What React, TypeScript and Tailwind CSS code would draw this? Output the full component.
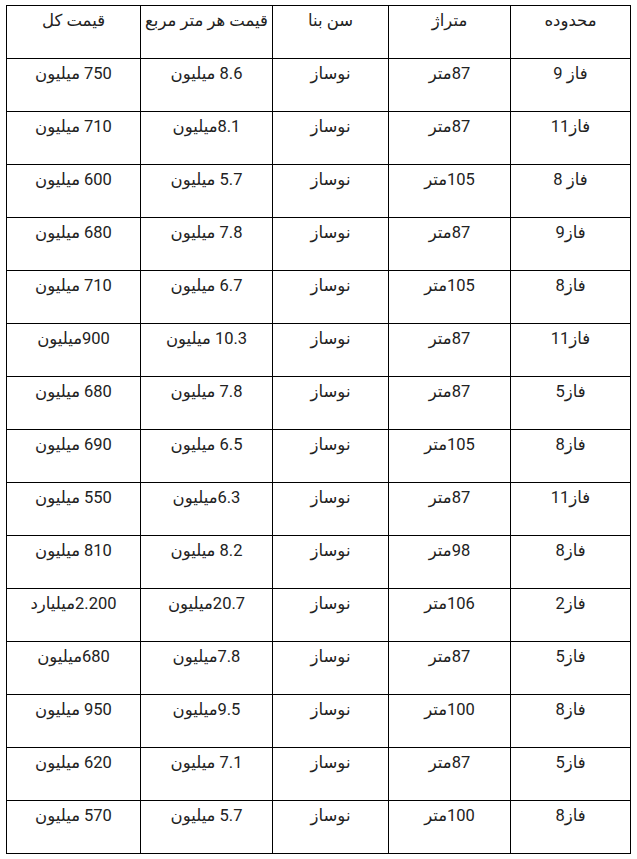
import React from "react";

const headers = ["محدوده", "متراژ", "سن بنا", "قیمت هر متر مربع", "قیمت کل"];

const rows: string[][] = [
  ["فاز 9", "87متر", "نوساز", "8.6 میلیون", "750 میلیون"],
  ["فاز11", "87متر", "نوساز", "8.1میلیون", "710 میلیون"],
  ["فاز 8", "105متر", "نوساز", "5.7 میلیون", "600 میلیون"],
  ["فاز9", "87متر", "نوساز", "7.8 میلیون", "680 میلیون"],
  ["فاز8", "105متر", "نوساز", "6.7 میلیون", "710 میلیون"],
  ["فاز11", "87متر", "نوساز", "10.3 میلیون", "900میلیون"],
  ["فاز5", "87متر", "نوساز", "7.8 میلیون", "680 میلیون"],
  ["فاز8", "105متر", "نوساز", "6.5 میلیون", "690 میلیون"],
  ["فاز11", "87متر", "نوساز", "6.3میلیون", "550 میلیون"],
  ["فاز8", "98متر", "نوساز", "8.2 میلیون", "810 میلیون"],
  ["فاز2", "106متر", "نوساز", "20.7میلیون", "2.200میلیارد"],
  ["فاز5", "87متر", "نوساز", "7.8میلیون", "680میلیون"],
  ["فاز8", "100متر", "نوساز", "9.5میلیون", "950 میلیون"],
  ["فاز5", "87متر", "نوساز", "7.1 میلیون", "620 میلیون"],
  ["فاز8", "100متر", "نوساز", "5.7 میلیون", "570 میلیون"],
];

const widths = ["w-[120px]", "w-[122px]", "w-[116px]", "w-[132px]", "w-[134px]"];

const cell =
  "h-[53px] border border-black align-top pt-[5px] text-center font-normal";

export default function App() {
  return (
    <div className="bg-white min-h-screen pt-[5px] pl-[6px]">
      <table
        dir="rtl"
        className="w-[624px] table-fixed border-collapse text-[16.5px] leading-[20px] text-[#222]"
        style={{ fontFamily: "Roboto, 'DejaVu Sans', sans-serif" }}
      >
        <thead>
          <tr>
            {headers.map((h, i) => (
              <th key={i} className={`${cell} ${widths[i]}`}>
                {h}
              </th>
            ))}
          </tr>
        </thead>
        <tbody>
          {rows.map((r, ri) => (
            <tr key={ri}>
              {r.map((c, ci) => (
                <td key={ci} className={cell}>
                  {c}
                </td>
              ))}
            </tr>
          ))}
        </tbody>
      </table>
    </div>
  );
}
